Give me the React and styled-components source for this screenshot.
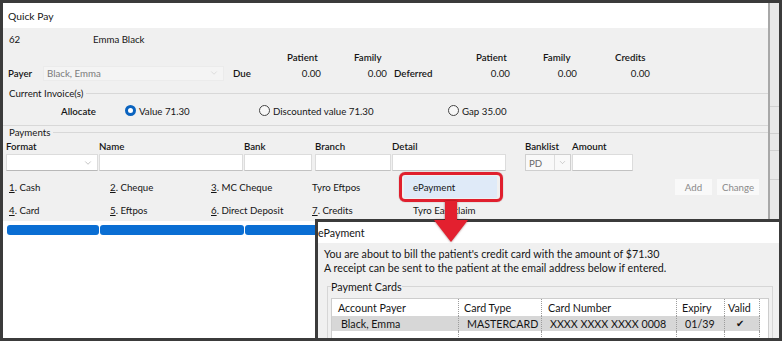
import React from "react";
import styled, { createGlobalStyle } from "styled-components";
import { ChevronDown } from "lucide-react";

const GlobalStyle = createGlobalStyle`
  html, body {
    margin: 0;
    padding: 0;
    background: #ffffff;
  }
  *, *::before, *::after {
    box-sizing: border-box;
  }
`;

const totals = {
  headers: [
    { col: 4, text: "Patient", indent: 22 },
    { col: 5, text: "Family", indent: 33 },
    { col: 7, text: "Patient", indent: 26 },
    { col: 8, text: "Family", indent: 33 },
    { col: 9, text: "Credits", indent: 38 },
  ],
};

const fields = [
  { label: "Format", width: 92, gap: 0, combo: true },
  { label: "Name", width: 144, gap: 1 },
  { label: "Bank", width: 68, gap: 1 },
  { label: "Branch", width: 76, gap: 3 },
  { label: "Detail", width: 114, gap: 1 },
  { label: "Banklist", width: 46, gap: 19, banklist: "PD" },
  { label: "Amount", width: 61, gap: 1 },
];

const methodRows = [
  [
    { key: "1", label: "Cash" },
    { key: "2", label: "Cheque" },
    { key: "3", label: "MC Cheque" },
    { label: "Tyro Eftpos" },
    { label: "ePayment", active: true },
  ],
  [
    { key: "4", label: "Card" },
    { key: "5", label: "Eftpos" },
    { key: "6", label: "Direct Deposit" },
    { key: "7", label: "Credits" },
    { label: "Tyro Easyclaim" },
  ],
];

const cardColumns = [
  { title: "Account Payer", head: 6, cell: 9 },
  { title: "Card Type", head: 5, cell: 8 },
  { title: "Card Number", head: 6, cell: 8 },
  { title: "Expiry", head: 5, cell: 8 },
  { title: "Valid", head: 3, cell: 11 },
];

const cards = [["Black, Emma", "MASTERCARD", "XXXX XXXX XXXX 0008", "01/39", "✔"]];

const App = () => {
  return (
    <>
      <GlobalStyle />
      <Frame>
        <Window>
          <TitleBar>Quick Pay</TitleBar>
          <Body>
            <PatientRow>
              <PatientId>62</PatientId>
              <span>Emma Black</span>
            </PatientRow>

            <Totals>
              {totals.headers.map((h) => (
                <Label key={h.col + h.text} indent={h.indent} style={{ gridColumn: h.col }}>
                  {h.text}
                </Label>
              ))}
              <Label style={{ gridColumn: 1 }}>Payer</Label>
              <Select width={181} height={15} disabled>
                <span>Black, Emma</span>
                <ChevronDown size={10} strokeWidth={1.2} color="#c4c4c4" />
              </Select>
              <Label indent={6}>Due</Label>
              <Value>0.00</Value>
              <Value>0.00</Value>
              <Label indent={7}>Deferred</Label>
              <Value>0.00</Value>
              <Value>0.00</Value>
              <Value>0.00</Value>
            </Totals>

            <Group top={6} bottom={4} closed>
              <Legend>Current Invoice(s)</Legend>
              <AllocateRow>
                <Label as="span" style={{ width: 64 }}>
                  Allocate
                </Label>
                <RadioOption width={134}>
                  <Radio checked />
                  Value 71.30
                </RadioOption>
                <RadioOption width={189}>
                  <Radio />
                  Discounted value 71.30
                </RadioOption>
                <RadioOption>
                  <Radio />
                  Gap 35.00
                </RadioOption>
              </AllocateRow>
            </Group>

            <Group>
              <Legend>Payments</Legend>
              <FieldRow>
                {fields.map((f) => (
                  <Field key={f.label} width={f.width} gap={f.gap}>
                    <FieldLabel>{f.label}</FieldLabel>
                    {f.combo && (
                      <Select width={f.width}>
                        <span />
                        <ChevronDown size={10} strokeWidth={1.2} color="#8a8a8a" />
                      </Select>
                    )}
                    {f.banklist && (
                      <Banklist>
                        <span>{f.banklist}</span>
                        <DropButton>
                          <ChevronDown size={9} strokeWidth={1.2} color="#9a9a9a" />
                        </DropButton>
                      </Banklist>
                    )}
                    {!f.combo && !f.banklist && <TextBox />}
                  </Field>
                ))}
              </FieldRow>

              {methodRows.map((row, i) => (
                <MethodRow key={i} first={i === 0}>
                  {row.map((m) => (
                    <Method key={m.label} active={m.active}>
                      {m.key && (
                        <>
                          <u>{m.key}</u>.&nbsp;
                        </>
                      )}
                      {m.label}
                      {m.active && <Highlight />}
                    </Method>
                  ))}
                  {i === 0 && (
                    <>
                      <GhostButton width={37}>Add</GhostButton>
                      <GhostButton width={42} last>
                        Change
                      </GhostButton>
                    </>
                  )}
                </MethodRow>
              ))}
            </Group>
          </Body>

          <ListArea>
            <Bar width={92} />
            <Bar width={144} />
            <Bar width={160} />
          </ListArea>
        </Window>
        <Backdrop />

        <Dialog>
          <DialogTitle>ePayment</DialogTitle>
          <DialogBody>
            <div>You are about to bill the patient's credit card with the amount of $71.30</div>
            <div>A receipt can be sent to the patient at the email address below if entered.</div>
            <CardGroup>
              <CardLegend>Payment Cards</CardLegend>
              <CardTable>
                {cardColumns.map((c) => (
                  <Cell key={c.title} pad={c.head}>
                    {c.title}
                  </Cell>
                ))}
                <Cell end />
                {cards.map((row) =>
                  row.map((v, j) => (
                    <Cell key={j} pad={cardColumns[j].cell} selected bold={j === 4}>
                      {v}
                    </Cell>
                  ))
                )}
                <Cell end />
                {cardColumns.map((c) => (
                  <Cell key={c.title + "-empty"} />
                ))}
                <Cell end />
              </CardTable>
            </CardGroup>
          </DialogBody>
        </Dialog>

        <Arrow viewBox="0 0 38 44" width="38" height="44">
          <path d="M12 0 H24 V19 H35 L18 41 L1 19 H12 Z" fill="#e3202f" />
        </Arrow>
      </Frame>
    </>
  );
};

const Frame = styled.div`
  position: relative;
  display: flex;
  width: 782px;
  height: 341px;
  overflow: hidden;
  border: 3px solid #3b3b3b;
  background: #e6e6e6;
  font-family: Lato, "Open Sans", sans-serif;
  font-size: 9.7px;
  line-height: 14px;
  color: #151515;
`;

const Window = styled.div`
  display: flex;
  flex-direction: column;
  width: 767px;
  border-right: 2px solid #a8a8a8;
  background: #ffffff;
`;

const TitleBar = styled.div`
  display: flex;
  align-items: center;
  flex-shrink: 0;
  height: 25px;
  padding-left: 5px;
  background: #ffffff;
  font-size: 10.3px;
`;

const Body = styled.div`
  display: flex;
  flex-direction: column;
  flex-shrink: 0;
  background: #f0f0f0;
`;

const PatientRow = styled.div`
  display: flex;
  align-items: center;
  height: 21px;
  padding-left: 6px;
`;

const PatientId = styled.span`
  width: 84px;
`;

const Totals = styled.div`
  display: grid;
  grid-template-columns: 35px 184px 38px 56px 66px 63px 60px 67px 73px;
  grid-auto-rows: 16px;
  align-items: center;
  margin-left: 5px;
`;

const Label = styled.span`
  font-weight: 600;
  padding-left: ${(p) => p.indent || 0}px;
`;

const Value = styled.span`
  text-align: right;
`;

const Select = styled.div`
  display: flex;
  align-items: center;
  justify-content: space-between;
  width: ${(p) => p.width}px;
  height: ${(p) => p.height || 17}px;
  padding: 0 4px 0 3px;
  background: ${(p) => (p.disabled ? "#f4f4f4" : "#ffffff")};
  border: 1px solid ${(p) => (p.disabled ? "#ebebeb" : "#dcdcdc")};
  border-bottom-color: ${(p) => (p.disabled ? "#ebebeb" : "#b8b8b8")};
  color: ${(p) => (p.disabled ? "#7a7a7a" : "#151515")};
`;

const Group = styled.fieldset`
  margin: ${(p) => p.top || 0}px 0 0;
  padding: 0 0 ${(p) => p.bottom || 0}px;
  min-width: 0;
  border: none;
  border-top: 1px solid #d8d8d8;
  border-bottom: ${(p) => (p.closed ? "1px solid #d8d8d8" : "none")};
`;

const Legend = styled.legend`
  padding: 0 3px 0 6px;
  line-height: 13px;
`;

const AllocateRow = styled.div`
  display: flex;
  align-items: center;
  height: 21px;
  padding-left: 58px;
`;

const RadioOption = styled.label`
  display: flex;
  align-items: center;
  gap: 3px;
  width: ${(p) => (p.width ? `${p.width}px` : "auto")};
`;

const Radio = styled.span`
  width: 11px;
  height: 11px;
  border-radius: 50%;
  flex-shrink: 0;
  background: ${(p) => (p.checked ? "#ffffff" : "#f7f7f7")};
  border: ${(p) => (p.checked ? "3px solid #0a63bf" : "1px solid #444444")};
`;

const FieldRow = styled.div`
  display: flex;
  margin-left: 3px;
`;

const Field = styled.div`
  display: flex;
  flex-direction: column;
  width: ${(p) => p.width}px;
  margin-left: ${(p) => p.gap}px;
`;

const FieldLabel = styled.span`
  font-weight: 600;
  line-height: 14px;
  margin-bottom: 1px;
`;

const TextBox = styled.div`
  height: 17px;
  background: #ffffff;
  border: 1px solid #dcdcdc;
  border-bottom-color: #c2c2c2;
`;

const Banklist = styled.div`
  display: flex;
  align-items: center;
  height: 17px;
  padding-left: 3px;
  background: #f9f9f9;
  border: 1px solid #cfcfcf;
  color: #6a6a6a;
  span {
    flex: 1;
  }
`;

const DropButton = styled.div`
  display: flex;
  align-items: center;
  justify-content: center;
  width: 16px;
  height: 100%;
  border-left: 1px solid #dedede;
`;

const MethodRow = styled.div`
  display: flex;
  align-items: center;
  gap: 8px;
  height: 22px;
  margin: ${(p) => (p.first ? "5px 0 0 -3px" : "1px 0 0 -3px")};
`;

const Method = styled.div`
  position: relative;
  display: flex;
  align-items: center;
  flex-shrink: 0;
  width: 93px;
  height: 22px;
  padding-left: 9px;
  background: ${(p) => (p.active ? "#dfeaf8" : "transparent")};
  u {
    text-underline-offset: 1px;
  }
`;

const Highlight = styled.span`
  position: absolute;
  inset: -4px -6px -4px -5px;
  border: 3px solid #e01f2e;
  border-radius: 6px;
  box-shadow: 0 0 1px rgba(80, 0, 0, 0.6);
`;

const GhostButton = styled.span`
  display: flex;
  align-items: center;
  justify-content: center;
  width: ${(p) => p.width}px;
  height: 16px;
  margin-left: ${(p) => (p.last ? "-3px" : "auto")};
  margin-right: ${(p) => (p.last ? "9px" : "0")};
  background: #f9f9f9;
  color: #8a8a8a;
`;

const ListArea = styled.div`
  flex: 1;
  display: flex;
  gap: 1px;
  padding: 4px 0 0 4px;
  background: #ffffff;
`;

const Bar = styled.div`
  width: ${(p) => p.width}px;
  height: 10px;
  border-radius: 3px;
  background: #0a6ed3;
`;

const Backdrop = styled.div`
  flex: 1;
  background:
    linear-gradient(#d0d0d0, #d0d0d0) 0 103px / 100% 1px no-repeat,
    linear-gradient(#d0d0d0, #d0d0d0) 0 130px / 100% 1px no-repeat,
    linear-gradient(#d0d0d0, #d0d0d0) 0 147px / 100% 1px no-repeat,
    linear-gradient(#d0d0d0, #d0d0d0) 0 176px / 100% 1px no-repeat,
    #e8e8e8;
`;

const Dialog = styled.div`
  position: absolute;
  left: 312px;
  top: 216px;
  right: 0;
  bottom: 0;
  z-index: 2;
  display: flex;
  flex-direction: column;
  border-top: 3px solid #3b3b3b;
  border-left: 3px solid #3b3b3b;
  background: #f0f0f0;
  font-size: 10.7px;
`;

const DialogTitle = styled.div`
  display: flex;
  align-items: center;
  flex-shrink: 0;
  height: 21px;
  padding-left: 0;
  background: #ffffff;
`;

const DialogBody = styled.div`
  flex: 1;
  min-height: 0;
  overflow: hidden;
  padding: 4px 6px 0;
`;

const CardGroup = styled.fieldset`
  margin: 5px 0 0 3px;
  padding: 0 3px 3px;
  min-width: 0;
  border: 1px solid #d6d6d6;
`;

const CardLegend = styled.legend`
  padding: 0;
  line-height: 13px;
`;

const CardTable = styled.div`
  display: grid;
  grid-template-columns: 127px 83px 135px 48px 35px 1fr;
  grid-template-rows: 17px 15px 30px;
  margin-top: 5px;
  background: #ffffff;
  border: 1px solid #cdcdcd;
`;

const Cell = styled.div`
  display: flex;
  align-items: center;
  padding-left: ${(p) => p.pad || 0}px;
  border-right: ${(p) => (p.end ? "none" : "1px dotted #9c9c9c")};
  background: ${(p) => (p.selected ? "#d7d7d7" : "#ffffff")};
  font-family: ${(p) => (p.bold ? '"DejaVu Sans", sans-serif' : "inherit")};
  font-size: ${(p) => (p.bold ? "10px" : "inherit")};
`;

const Arrow = styled.svg`
  position: absolute;
  left: 430px;
  top: 198px;
  z-index: 3;
  filter: drop-shadow(0 0 1px rgba(90, 0, 0, 0.6));
`;

export default App;
